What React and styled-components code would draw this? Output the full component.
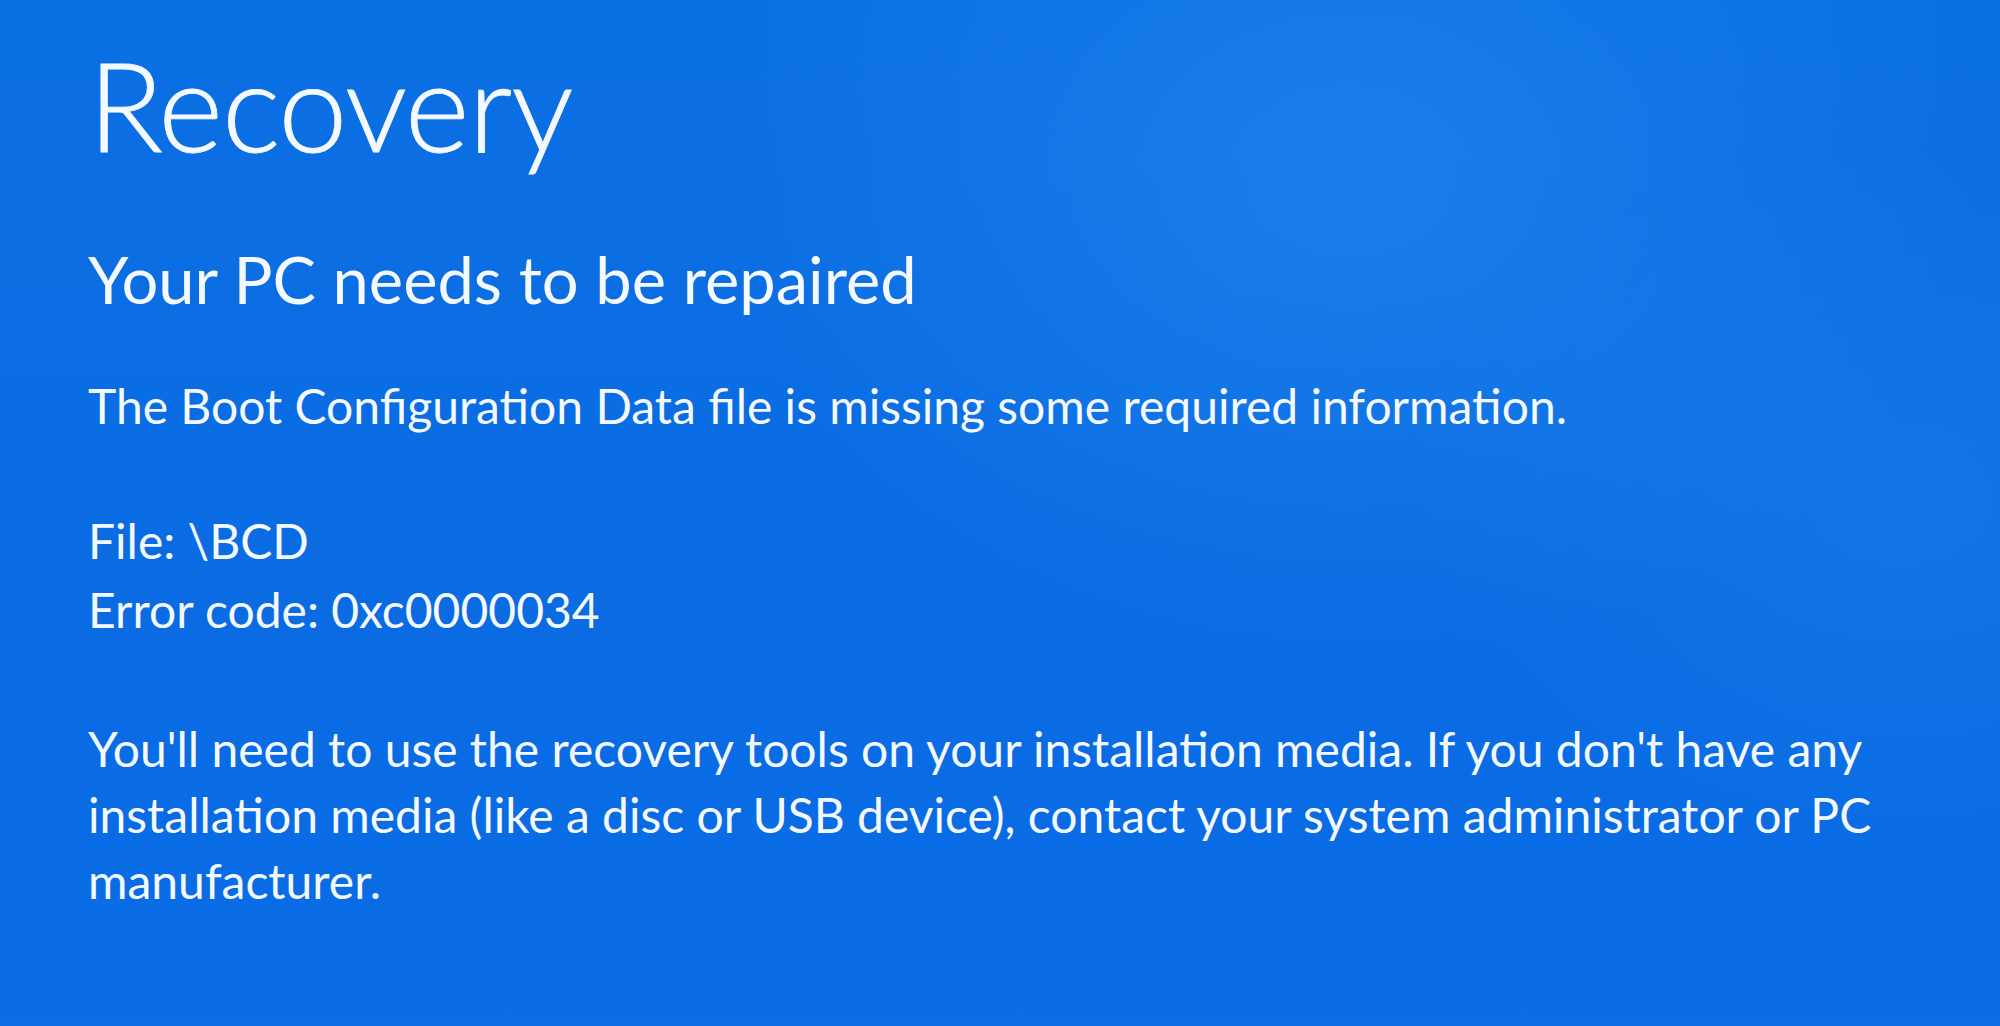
import React from "react";
import styled, { createGlobalStyle } from "styled-components";

const Global = createGlobalStyle`
  html, body { margin: 0; padding: 0; }
  body { background: #0b6fe2; }
`;

const Screen = styled.main`
  width: 2000px;
  height: 1026px;
  box-sizing: border-box;
  overflow: hidden;
  padding: 34px 0 0 88px;
  display: flex;
  flex-direction: column;
  color: #f4f8ff;
  font-family: Lato, "Open Sans", "DejaVu Sans", sans-serif;
  background:
    radial-gradient(ellipse 900px 700px at 1350px 180px, rgba(40,140,240,0.5), rgba(40,140,240,0) 70%),
    radial-gradient(ellipse 700px 500px at 1900px 500px, rgba(30,130,235,0.45), rgba(30,130,235,0) 70%),
    linear-gradient(180deg, #0b70e3 0%, #0a6be3 60%, #0a6de6 100%);
`;

const Title = styled.h1`
  margin: 0;
  font-size: 124px;
  font-weight: 300;
  line-height: 140px;
  letter-spacing: -1px;
  -webkit-text-stroke: 0.8px #f4f8ff;
`;

const Subtitle = styled.h2`
  margin: 65px 0 0 0;
  font-size: 65px;
  font-weight: 400;
  line-height: 80px;
`;

const Text = styled.p`
  margin: ${(p) => p.$gap || 0}px 0 0 0;
  font-size: 48px;
  font-weight: 400;
  line-height: ${(p) => p.$lh || 67}px;
`;

export default function App() {
  return (
    <>
      <Global />
      <Screen>
        <Title>Recovery</Title>
        <Subtitle>Your PC needs to be repaired</Subtitle>
        <Text $gap={53}>The Boot Configuration Data file is missing some required information.</Text>
        <Text $gap={67} $lh={69}>
          File: \BCD
          <br />
          Error code: 0xc0000034
        </Text>
        <Text $gap={72} $lh={66}>
          You'll need to use the recovery tools on your installation media. If you don't have any
          <br />
          installation media (like a disc or USB device), contact your system administrator or PC
          <br />
          manufacturer.
        </Text>
      </Screen>
    </>
  );
}
